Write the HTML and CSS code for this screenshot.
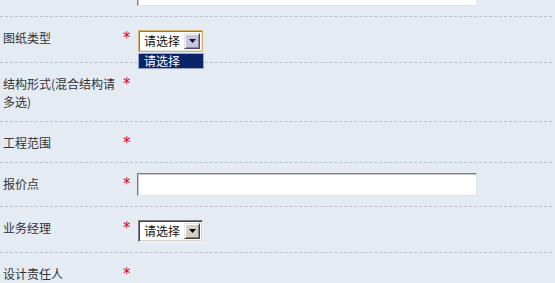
FILE: index.html
```html
<!DOCTYPE html>
<html lang="zh-CN">
<head>
<meta charset="utf-8">
<title>表单</title>
<link rel="stylesheet" href="styles.css">
</head>
<body>
<div class="form">
  <div class="row">
    <div class="label"></div>
    <div class="star"></div>
    <div class="field"><div class="input"></div></div>
  </div>
  <div class="row">
    <div class="label">图纸类型</div>
    <div class="star">*</div>
    <div class="field">
      <div class="select focus">
        <span class="sel-text">请选择</span>
        <span class="sel-btn"><svg width="7" height="4" viewBox="0 0 7 4"><polygon points="0,0 7,0 3.5,4"/></svg></span>
        <div class="dropdown">请选择</div>
      </div>
    </div>
  </div>
  <div class="row">
    <div class="label">结构形式(混合结构请多选)</div>
    <div class="star">*</div>
    <div class="field"></div>
  </div>
  <div class="row">
    <div class="label">工程范围</div>
    <div class="star">*</div>
    <div class="field"></div>
  </div>
  <div class="row">
    <div class="label">报价点</div>
    <div class="star">*</div>
    <div class="field"><div class="input"></div></div>
  </div>
  <div class="row">
    <div class="label">业务经理</div>
    <div class="star">*</div>
    <div class="field">
      <div class="select">
        <span class="sel-text">请选择</span>
        <span class="sel-btn"><svg width="7" height="4" viewBox="0 0 7 4"><polygon points="0,0 7,0 3.5,4"/></svg></span>
      </div>
    </div>
  </div>
  <div class="row">
    <div class="label">设计责任人</div>
    <div class="star">*</div>
    <div class="field"></div>
  </div>
</div>
</body>
</html>
```

FILE: styles.css
```css
html, body {
  margin: 0;
  background: #e5ebf3;
}
body {
  font-family: "Noto Sans CJK SC", "Noto Sans", sans-serif;
  font-size: 12px;
  color: #333;
  overflow: hidden;
}
.form {
  width: 552px;
  margin-top: -27px;
}
.row {
  display: flex;
  align-items: flex-start;
  padding: 10px 0;
  border-bottom: 1px dashed #bcc2cc;
}
.label {
  width: 117px;
  padding: 2px 3px 0 3px;
  line-height: 18px;
  flex: none;
}
.star {
  width: 14px;
  flex: none;
  padding-top: 2px;
  line-height: 18px;
  min-height: 18px;
  font-family: "DejaVu Sans", sans-serif;
  font-size: 15px;
  color: #e2001a;
}
.field {
  flex: none;
}
.input {
  width: 340px;
  height: 23px;
  box-sizing: border-box;
  background: #fff;
  border: 1px solid;
  border-color: #7d7d7d #e1e4e9 #e1e4e9 #7d7d7d;
  box-shadow: inset 1px 1px 0 #c9c9c9;
}
.select {
  position: relative;
  margin: 3px 0 0 1px;
  width: 65px;
  height: 22px;
  box-sizing: border-box;
  background: #fff;
  border: 1px solid;
  border-color: #808080 #f4f4f4 #f4f4f4 #808080;
  box-shadow: inset 1px 1px 0 #404040, inset -1px -1px 0 #d4d0c8;
  display: flex;
  align-items: center;
  justify-content: space-between;
  padding: 0 2px 0 5px;
  line-height: 16px;
  color: #111;
}
.select.focus {
  border-color: #d8b868;
  box-shadow: inset 1px 1px 0 #7a7a7a, inset -1px -1px 0 #e6e2d8;
}
.sel-btn {
  width: 16px;
  height: 16px;
  box-sizing: border-box;
  background: #d4d0c8;
  border: 1px solid;
  border-color: #e8e6e0 #404040 #404040 #e8e6e0;
  box-shadow: inset 1px 1px 0 #fff, inset -1px -1px 0 #808080;
  display: flex;
  align-items: center;
  justify-content: center;
}
.sel-btn svg {
  display: block;
  fill: #000;
}
.focus .sel-btn {
  background: #c7c4dc;
  border-color: #e4e2ee #4a4a66 #4a4a66 #e4e2ee;
  box-shadow: inset 1px 1px 0 #f2f1f8, inset -1px -1px 0 #8a88a6;
}
.focus .sel-btn svg {
  fill: #14144a;
}
.dropdown {
  position: absolute;
  left: -1px;
  top: calc(100% + 2px);
  width: 66px;
  height: 16px;
  box-sizing: border-box;
  background: #0a246a;
  border: 1px solid #9aa6c4;
  color: #fff;
  padding-left: 5px;
  line-height: 14px;
}
```
